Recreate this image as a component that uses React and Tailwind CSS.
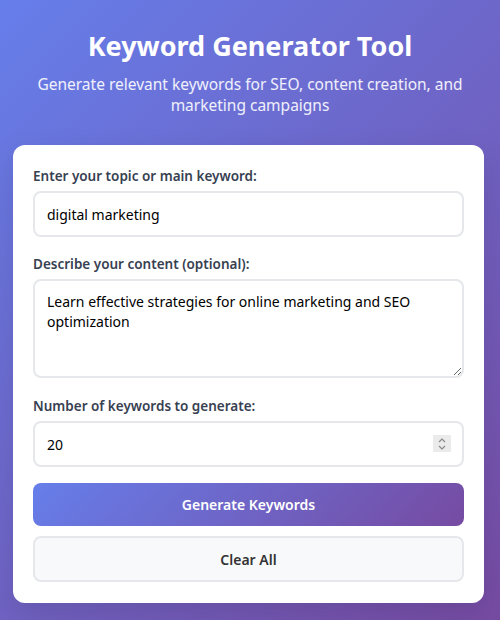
import React from "react";

export default function App() {
  const font = { fontFamily: '"Noto Sans", "Open Sans", sans-serif' };
  return (
    <div
      className="min-h-[620px] w-full bg-[linear-gradient(135deg,#667eea_0%,#764ba2_100%)] text-white"
      style={font}
    >
      <div className="pt-[29px] text-center">
        <h1 className="text-[27px] leading-[34px] font-bold text-white">Keyword Generator Tool</h1>
        <p className="mt-[11px] px-[18px] text-[15.5px] leading-[21px] text-white/90">
          Generate relevant keywords for SEO, content creation, and marketing campaigns
        </p>
      </div>
      <div className="ml-[13px] mt-[29px] w-[471px] rounded-xl bg-white px-5 pt-[21px] pb-[21px] shadow-[0_10px_30px_rgba(0,0,0,0.1)]">
        <div className="mb-[17px]">
          <label className="mb-[5px] block text-[13.5px] leading-5 font-semibold text-[#374151]">
            Enter your topic or main keyword:
          </label>
          <input
            type="text"
            readOnly
            value="digital marketing"
            className="block h-[46px] w-full rounded-lg border-2 border-[#e5e7eb] px-3 text-[14px] text-black outline-none"
          />
        </div>
        <div className="mb-[18px]">
          <label className="mb-[5px] block text-[13.5px] leading-5 font-semibold text-[#374151]">
            Describe your content (optional):
          </label>
          <textarea
            readOnly
            value="Learn effective strategies for online marketing and SEO optimization"
            className="block h-[99px] w-full resize-y rounded-lg border-2 border-[#e5e7eb] px-3 py-[11px] text-[14px] leading-5 text-black outline-none"
          />
        </div>
        <div className="mb-[16px]">
          <label className="mb-[5px] block text-[13.5px] leading-5 font-semibold text-[#374151]">
            Number of keywords to generate:
          </label>
          <div className="relative">
            <input
              type="text"
              readOnly
              value="20"
              className="block h-[46px] w-full rounded-lg border-2 border-[#e5e7eb] px-3 text-[14px] text-black outline-none"
            />
            <div className="absolute right-[13px] top-[14px] flex h-[17px] w-[18px] flex-col items-center justify-center bg-[#ebebeb]">
              <svg width="10" height="14" viewBox="0 0 10 14" fill="none" stroke="#8a8a8a" strokeWidth="1.2">
                <path d="M2 5 L5 2 L8 5" />
                <path d="M2 9 L5 12 L8 9" />
              </svg>
            </div>
          </div>
        </div>
        <button className="block h-[43px] w-full rounded-lg bg-[linear-gradient(135deg,#667eea_0%,#764ba2_100%)] text-[14px] font-semibold text-white">
          Generate Keywords
        </button>
        <button className="mt-[10px] block h-[46px] w-full rounded-lg border-2 border-[#e5e7eb] bg-[#f8f9fa] text-[14px] font-semibold text-[#333]">
          Clear All
        </button>
      </div>
      <div className="h-[18px]" />
    </div>
  );
}
